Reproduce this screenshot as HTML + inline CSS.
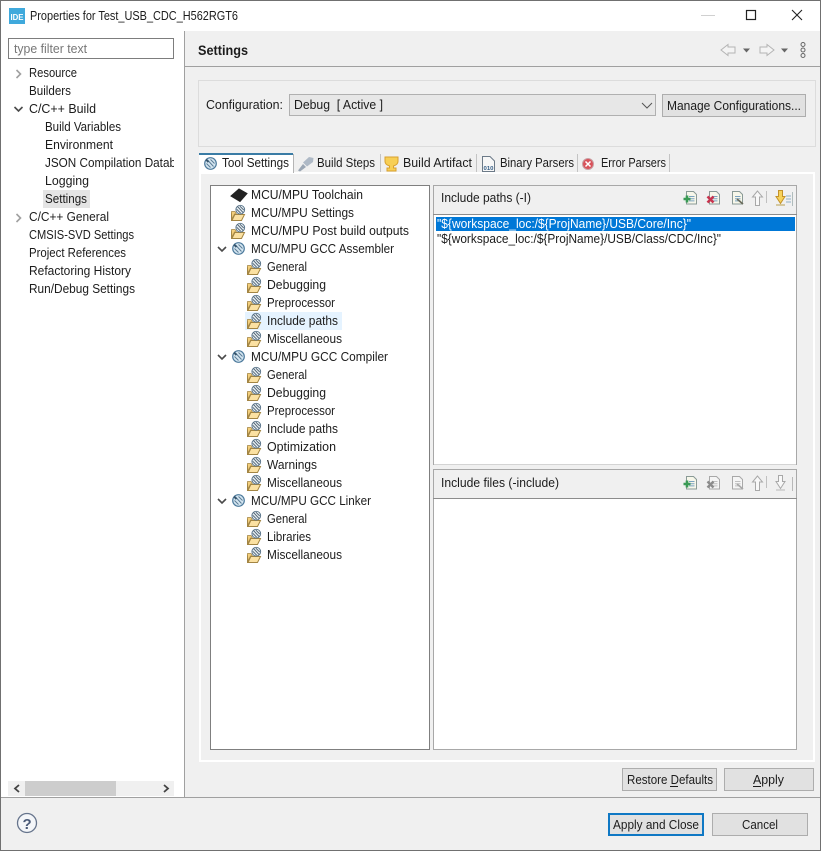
<!DOCTYPE html>
<html lang="en">
<head>
<meta charset="utf-8">
<title>Properties for Test_USB_CDC_H562RGT6</title>
<style>
html,body{margin:0;padding:0;background:#fff;width:821px;height:851px;overflow:hidden}
svg{display:block}
text{font-family:"Liberation Sans",sans-serif;font-size:12.5px;fill:#1c1c1c}
</style>
</head>
<body>
<svg width="821" height="851" viewBox="0 0 821 851" xmlns="http://www.w3.org/2000/svg">
<defs>
  <clipPath id="leftclip"><rect x="8" y="60" width="166" height="720"/></clipPath>
  <g id="tool">
    <circle cx="6.5" cy="6.5" r="5.8" fill="#d5e6f1" stroke="#4d7a9c" stroke-width="1.2"/>
    <path d="M3.5 3 L9.5 9.5 M6.5 2.5 L10.5 6.5 M2.5 6.5 L6.5 10.5" stroke="#5b7d96" stroke-width="1" fill="none"/>
    <path d="M2.5 1.8 L5.2 4.2 L3.8 5.8 L1.4 3.2Z" fill="#37556d"/>
  </g>
  <g id="folder">
    <path d="M1.5 7.5 L1.5 15.5 L11.5 15.5 L14.5 9.5 L4.8 9.5 L2.2 15" fill="#fbe1a2" stroke="#a38543" stroke-width="1"/>
    <path d="M1.5 8 L1.5 6.5 L5 6.5 L6.5 9 L4.5 9 L2 14Z" fill="#f4cf7c" stroke="#a38543" stroke-width=".7"/>
    <g transform="translate(5.2,-.4) scale(.78)">
      <circle cx="6.5" cy="6.5" r="5.6" fill="#e8eff3" stroke="#587389" stroke-width="1.2"/>
      <path d="M3 2.5 L10 10 M2 6 L7 11 M6 2 L11 7" stroke="#4c6072" stroke-width="1.2" fill="none"/>
    </g>
  </g>
  <path id="chevd" d="M0 0 L4 4 L8 0" fill="none" stroke="#4a4a4a" stroke-width="1.6"/>
  <path id="chevr" d="M0 0 L4 4 L0 8" fill="none" stroke="#a0a0a0" stroke-width="1.6"/>
  <g id="doc">
    <path d="M3.5 .5 H10.5 L13.5 3.5 V13 H3.5Z" fill="#f7f7ea" stroke="#8a9a96" stroke-width="1"/>
    <path d="M6 5.5H11.5 M6 7.7H11.5 M6 9.9H11.5" stroke="#7aa2c0" stroke-width="1"/>
  </g>
  <g id="docgrey">
    <path d="M3.5 .5 H10.5 L13.5 3.5 V13 H3.5Z" fill="#f5f5f5" stroke="#a8a8a8" stroke-width="1"/>
    <path d="M6 5.5H11.5 M6 7.7H11.5 M6 9.9H11.5" stroke="#c0c0c0" stroke-width="1"/>
  </g>
  <g id="plus"><path d="M0 3.5H7M3.5 0V7" stroke="#3a9a55" stroke-width="2.6"/></g>
</defs>

<!-- window -->
<rect x="0" y="0" width="821" height="851" fill="#fff"/>
<rect x="185" y="31" width="635" height="766" fill="#f0f0f0"/>
<rect x="1" y="797" width="819" height="53" fill="#f0f0f0"/>

<!-- title -->
<rect x="9" y="8" width="16" height="16" fill="#3fa9dc"/>
<text x="10.5" y="20" style="font-size:8.5px;font-weight:bold;fill:#fff" textLength="13" lengthAdjust="spacingAndGlyphs">IDE</text>
<text x="30" y="20" textLength="208" lengthAdjust="spacingAndGlyphs">Properties for Test_USB_CDC_H562RGT6</text>
<path d="M701 15.5H715" stroke="#d0d0d0" stroke-width="1"/>
<rect x="746.5" y="10.5" width="9" height="9" fill="none" stroke="#222" stroke-width="1.2"/>
<path d="M792 10L802 20M802 10L792 20" stroke="#222" stroke-width="1.1"/>

<!-- left panel -->
<rect x="8.5" y="38.5" width="165" height="20" fill="#fff" stroke="#7d7d7d"/>
<text x="14" y="53" style="fill:#777" textLength="73" lengthAdjust="spacingAndGlyphs">type filter text</text>
<use href="#chevr" x="16.5" y="70"/>
<use href="#chevd" x="14.5" y="107"/>
<use href="#chevr" x="16.5" y="214"/>
<rect x="43" y="190" width="47" height="18" fill="#e4e4e4"/>
<g clip-path="url(#leftclip)">
<text x="29" y="77" textLength="48" lengthAdjust="spacingAndGlyphs">Resource</text>
<text x="29" y="95" textLength="42" lengthAdjust="spacingAndGlyphs">Builders</text>
<text x="29" y="113" textLength="67" lengthAdjust="spacingAndGlyphs">C/C++ Build</text>
<text x="45" y="131" textLength="76" lengthAdjust="spacingAndGlyphs">Build Variables</text>
<text x="45" y="149" textLength="68" lengthAdjust="spacingAndGlyphs">Environment</text>
<text x="45" y="167" textLength="131" lengthAdjust="spacingAndGlyphs">JSON Compilation Datab</text>
<text x="45" y="185" textLength="44" lengthAdjust="spacingAndGlyphs">Logging</text>
<text x="45" y="203" textLength="42" lengthAdjust="spacingAndGlyphs">Settings</text>
<text x="29" y="221" textLength="80" lengthAdjust="spacingAndGlyphs">C/C++ General</text>
<text x="29" y="239" textLength="105" lengthAdjust="spacingAndGlyphs">CMSIS-SVD Settings</text>
<text x="29" y="257" textLength="97" lengthAdjust="spacingAndGlyphs">Project References</text>
<text x="29" y="275" textLength="102" lengthAdjust="spacingAndGlyphs">Refactoring History</text>
<text x="29" y="293" textLength="106" lengthAdjust="spacingAndGlyphs">Run/Debug Settings</text>
</g>
<!-- scrollbar -->
<rect x="8" y="781" width="166" height="15" fill="#f0f0f0"/>
<rect x="25" y="781" width="91" height="15" fill="#cdcdcd"/>
<path d="M19 785L15 788.5L19 792" fill="none" stroke="#444" stroke-width="1.8"/>
<path d="M164 785L168 788.5L164 792" fill="none" stroke="#444" stroke-width="1.8"/>

<!-- separators -->
<rect x="184" y="31" width="1" height="766" fill="#a0a0a0"/>
<rect x="185" y="66" width="635" height="1" fill="#a0a0a0"/>
<rect x="1" y="797" width="819" height="1" fill="#a0a0a0"/>

<!-- header -->
<text x="198" y="55" style="font-weight:bold;font-size:14px" textLength="50" lengthAdjust="spacingAndGlyphs">Settings</text>
<path d="M728 44.5L721 50L728 55.5V53H735V47H728Z" fill="#f4f4f4" stroke="#b4b4b4"/>
<path d="M743 48.5H750L746.5 52.5Z" fill="#666"/>
<path d="M767 44.5L774 50L767 55.5V53H760V47H767Z" fill="#f4f4f4" stroke="#b4b4b4"/>
<path d="M781 48.5H788L784.5 52.5Z" fill="#666"/>
<g fill="none" stroke="#666" stroke-width="1"><circle cx="803" cy="44.5" r="2"/><circle cx="803" cy="50" r="2"/><circle cx="803" cy="55.5" r="2"/></g>

<!-- configuration group -->
<rect x="198.5" y="80.5" width="617" height="66" fill="#f0f0f0" stroke="#dcdcdc"/>
<text x="206" y="109" textLength="77" lengthAdjust="spacingAndGlyphs">Configuration:</text>
<rect x="289.5" y="94.5" width="366" height="21" fill="#e7e7e7" stroke="#b0b0b0"/>
<text x="294" y="109" textLength="89" lengthAdjust="spacingAndGlyphs" xml:space="preserve">Debug  [ Active ]</text>
<path d="M642 103L647 108L652 103" fill="none" stroke="#555" stroke-width="1"/>
<rect x="662.5" y="94.5" width="143" height="22" fill="#e1e1e1" stroke="#adadad"/>
<text x="667" y="110" textLength="134" lengthAdjust="spacingAndGlyphs">Manage Configurations...</text>

<!-- tab body -->
<rect x="199" y="172" width="616" height="590" fill="#fff"/>
<rect x="201" y="174" width="612" height="586" fill="#f0f0f0"/>

<!-- tabs -->
<rect x="199" y="153" width="94" height="21" fill="#fff"/>
<rect x="199" y="153" width="94" height="2" fill="#3a7ca5"/>
<rect x="293" y="154" width="1" height="19" fill="#b5b5b5"/>
<rect x="380" y="154" width="1" height="18" fill="#c4c4c4"/>
<rect x="476" y="154" width="1" height="18" fill="#c4c4c4"/>
<rect x="577" y="154" width="1" height="18" fill="#c4c4c4"/>
<rect x="669" y="154" width="1" height="18" fill="#c4c4c4"/>
<use href="#tool" x="204" y="157"/>
<text x="222" y="167" textLength="67" lengthAdjust="spacingAndGlyphs">Tool Settings</text>
<path d="M298 170.5L303 164L306 167L300 171.5Z" fill="#9aa6b4"/>
<path d="M303 162.5L309 157L313.5 158L313 162L307 166.5Z" fill="#aeb9c6"/>
<text x="317" y="167" textLength="58" lengthAdjust="spacingAndGlyphs">Build Steps</text>
<path d="M385 157H398V161.5C398 164 395 165.5 393.5 166V168H396V171H387V168H389.5V166C388 165.5 385 164 385 161.5Z" fill="#f7cf55" stroke="#d9a12e"/>
<text x="403" y="167" textLength="69" lengthAdjust="spacingAndGlyphs">Build Artifact</text>
<path d="M482.5 156.5H490L494.5 161V171.5H482.5Z" fill="#f7f7f7" stroke="#6c7a88"/>
<text x="483.5" y="170" style="font-size:5.5px;font-weight:bold;fill:#345d85" textLength="10" lengthAdjust="spacingAndGlyphs">010</text>
<text x="500" y="167" textLength="74" lengthAdjust="spacingAndGlyphs">Binary Parsers</text>
<circle cx="588" cy="164" r="5.5" fill="#d9525a" stroke="#c9a0a4"/>
<path d="M585.5 161.5L590.5 166.5M590.5 161.5L585.5 166.5" stroke="#fff" stroke-width="1.5"/>
<text x="601" y="167" textLength="65" lengthAdjust="spacingAndGlyphs">Error Parsers</text>

<!-- tool tree -->
<rect x="210.5" y="185.5" width="219" height="564" fill="#fff" stroke="#7f7f7f"/>
<rect x="245" y="312" width="97" height="18" fill="#e5f3ff"/>

<path d="M231 196L239 189L247 193.5L240 201.5Z" fill="#222" stroke="#222" stroke-width="1"/>
<text x="251" y="199" textLength="112" lengthAdjust="spacingAndGlyphs">MCU/MPU Toolchain</text>
<use href="#folder" x="230" y="205"/>
<text x="251" y="217" textLength="103" lengthAdjust="spacingAndGlyphs">MCU/MPU Settings</text>
<use href="#folder" x="230" y="223"/>
<text x="251" y="235" textLength="158" lengthAdjust="spacingAndGlyphs">MCU/MPU Post build outputs</text>
<use href="#chevd" x="218" y="247"/>
<use href="#tool" x="232" y="242"/>
<text x="251" y="253" textLength="143" lengthAdjust="spacingAndGlyphs">MCU/MPU GCC Assembler</text>
<use href="#folder" x="246" y="259"/>
<text x="267" y="271" textLength="40" lengthAdjust="spacingAndGlyphs">General</text>
<use href="#folder" x="246" y="277"/>
<text x="267" y="289" textLength="59" lengthAdjust="spacingAndGlyphs">Debugging</text>
<use href="#folder" x="246" y="295"/>
<text x="267" y="307" textLength="68" lengthAdjust="spacingAndGlyphs">Preprocessor</text>
<use href="#folder" x="246" y="313"/>
<text x="267" y="325" textLength="71" lengthAdjust="spacingAndGlyphs">Include paths</text>
<use href="#folder" x="246" y="331"/>
<text x="267" y="343" textLength="75" lengthAdjust="spacingAndGlyphs">Miscellaneous</text>
<use href="#chevd" x="218" y="355"/>
<use href="#tool" x="232" y="350"/>
<text x="251" y="361" textLength="137" lengthAdjust="spacingAndGlyphs">MCU/MPU GCC Compiler</text>
<use href="#folder" x="246" y="367"/>
<text x="267" y="379" textLength="40" lengthAdjust="spacingAndGlyphs">General</text>
<use href="#folder" x="246" y="385"/>
<text x="267" y="397" textLength="59" lengthAdjust="spacingAndGlyphs">Debugging</text>
<use href="#folder" x="246" y="403"/>
<text x="267" y="415" textLength="68" lengthAdjust="spacingAndGlyphs">Preprocessor</text>
<use href="#folder" x="246" y="421"/>
<text x="267" y="433" textLength="71" lengthAdjust="spacingAndGlyphs">Include paths</text>
<use href="#folder" x="246" y="439"/>
<text x="267" y="451" textLength="69" lengthAdjust="spacingAndGlyphs">Optimization</text>
<use href="#folder" x="246" y="457"/>
<text x="267" y="469" textLength="50" lengthAdjust="spacingAndGlyphs">Warnings</text>
<use href="#folder" x="246" y="475"/>
<text x="267" y="487" textLength="75" lengthAdjust="spacingAndGlyphs">Miscellaneous</text>
<use href="#chevd" x="218" y="499"/>
<use href="#tool" x="232" y="494"/>
<text x="251" y="505" textLength="120" lengthAdjust="spacingAndGlyphs">MCU/MPU GCC Linker</text>
<use href="#folder" x="246" y="511"/>
<text x="267" y="523" textLength="40" lengthAdjust="spacingAndGlyphs">General</text>
<use href="#folder" x="246" y="529"/>
<text x="267" y="541" textLength="44" lengthAdjust="spacingAndGlyphs">Libraries</text>
<use href="#folder" x="246" y="547"/>
<text x="267" y="559" textLength="75" lengthAdjust="spacingAndGlyphs">Miscellaneous</text>

<!-- include paths -->
<rect x="433.5" y="185.5" width="363" height="279" fill="#f0f0f0" stroke="#a8a8a8"/>
<rect x="434" y="214.5" width="362" height="250" fill="#fff"/>
<rect x="433" y="214" width="364" height="1" fill="#8c8c8c"/>
<text x="441" y="202" textLength="90" lengthAdjust="spacingAndGlyphs">Include paths (-I)</text>
<use href="#doc" x="683" y="191"/><g transform="translate(683.5,195.5)"><use href="#plus"/></g>
<use href="#doc" x="706" y="191"/><path d="M707.5 196.5L713.5 202.5M713.5 196.5L707.5 202.5" stroke="#c8354f" stroke-width="2.6"/>
<use href="#doc" x="729" y="191"/><path d="M737 199L743 204" stroke="#6a6a5a" stroke-width="1.6"/>
<path d="M757.5 191L752.5 197H755.5V205.5H759.5V197H762.5Z" fill="#f8f8f8" stroke="#a8a8a8"/>
<path d="M766.5 191V203" stroke="#c0c0c0"/>
<path d="M778.5 190.5V196.5H776L780.5 203.5L785 196.5H782.5V190.5Z" fill="#f7d25a" stroke="#c2922a"/>
<path d="M776 205H785" stroke="#b8a050"/><path d="M786 196H791M786 199H791M786 202H791" stroke="#8fb0c6"/><path d="M792.5 192V206" stroke="#b0bcbc"/>

<rect x="436" y="217" width="359" height="14" fill="#0078d7"/>
<text x="437" y="228" style="fill:#fff" textLength="254" lengthAdjust="spacingAndGlyphs">"${workspace_loc:/${ProjName}/USB/Core/Inc}"</text>
<text x="437" y="243" textLength="284" lengthAdjust="spacingAndGlyphs">"${workspace_loc:/${ProjName}/USB/Class/CDC/Inc}"</text>

<!-- include files -->
<rect x="433.5" y="469.5" width="363" height="280" fill="#f0f0f0" stroke="#a8a8a8"/>
<rect x="434" y="499" width="362" height="250" fill="#fff"/>
<rect x="433" y="498" width="364" height="1" fill="#8c8c8c"/>
<text x="441" y="487" textLength="118" lengthAdjust="spacingAndGlyphs">Include files (-include)</text>
<use href="#doc" x="683" y="476"/><g transform="translate(683.5,480.5)"><use href="#plus"/></g>
<use href="#docgrey" x="706" y="476"/><path d="M707.5 481.5L713.5 487.5M713.5 481.5L707.5 487.5" stroke="#8c8c8c" stroke-width="2.4"/>
<use href="#docgrey" x="729" y="476"/><path d="M737 484L743 489" stroke="#a8a8a8" stroke-width="1.6"/>
<path d="M757.5 476L752.5 482H755.5V490.5H759.5V482H762.5Z" fill="#f8f8f8" stroke="#a8a8a8"/>
<path d="M766.5 476V488" stroke="#c0c0c0"/>
<path d="M778.5 475.5V481.5H776L780.5 488.5L785 481.5H782.5V475.5Z" fill="#f8f8f8" stroke="#a8a8a8"/>
<path d="M776 490H785" stroke="#b8b8b8"/><path d="M792.5 477V491" stroke="#b8b8b8"/>

<!-- lower buttons -->
<rect x="622.5" y="768.5" width="94" height="22" fill="#e1e1e1" stroke="#adadad"/>
<text x="627" y="784" textLength="86" lengthAdjust="spacingAndGlyphs">Restore Defaults</text>
<path d="M670 786.5H678" stroke="#1c1c1c"/>
<rect x="724.5" y="768.5" width="89" height="22" fill="#e1e1e1" stroke="#adadad"/>
<text x="753" y="784" textLength="31" lengthAdjust="spacingAndGlyphs">Apply</text>
<path d="M753 786.5H761" stroke="#1c1c1c"/>

<!-- footer -->
<circle cx="27" cy="823" r="9.5" fill="#f4f6f9" stroke="#66748c" stroke-width="1.3"/>
<text x="22.5" y="829" style="font-size:15px;font-weight:bold;fill:#4a5a78">?</text>
<rect x="609" y="814" width="94" height="21" fill="#e1e1e1" stroke="#0f78c4" stroke-width="2"/>
<text x="613" y="829" textLength="86" lengthAdjust="spacingAndGlyphs">Apply and Close</text>
<rect x="712.5" y="813.5" width="95" height="22" fill="#e1e1e1" stroke="#adadad"/>
<text x="742" y="829" textLength="36" lengthAdjust="spacingAndGlyphs">Cancel</text>

<!-- window border -->
<rect x=".5" y=".5" width="820" height="850" fill="none" stroke="#707070"/>
</svg>
</body>
</html>
